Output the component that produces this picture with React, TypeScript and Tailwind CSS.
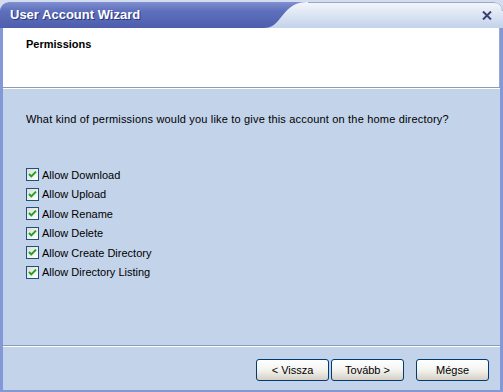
import React from "react";

const permissions = [
  "Allow Download",
  "Allow Upload",
  "Allow Rename",
  "Allow Delete",
  "Allow Create Directory",
  "Allow Directory Listing",
];

const font = "font-['Tahoma','Liberation_Sans',Arial,sans-serif]";

function CheckBox() {
  return (
    <span className="w-[13px] h-[13px] border border-[#1c5180] bg-gradient-to-br from-[#dcdcd7] to-white flex items-center justify-center">
      <svg width="9" height="9" viewBox="0 0 9 9">
        <path d="M1 4 L3.3 6.4 L8 1.6" fill="none" stroke="#21a121" strokeWidth="2" />
      </svg>
    </span>
  );
}

function Button({ label }: { label: string }) {
  return (
    <button className="block w-[73px] h-[22px] rounded-[3px] border border-[#003c74] bg-gradient-to-b from-white via-[#f3f3ef] to-[#d6d0c5] text-[11px] leading-[20px] text-black shadow-[inset_0_-1px_0_#d6d0c5]">
      {label}
    </button>
  );
}

export default function App() {
  return (
    <div className={`w-[503px] h-[392px] bg-[#d3ddef] overflow-hidden ${font}`}>
      <div className="h-full mt-[2px] rounded-t-[9px] overflow-hidden flex flex-col">
        {/* title bar */}
        <div className="relative h-[26px] shrink-0 flex items-center pl-[10px]">
          <svg className="absolute inset-0" width="503" height="26" viewBox="0 0 503 26">
            <defs>
              <linearGradient id="lite" x1="0" y1="0" x2="0" y2="1">
                <stop offset="0" stopColor="#f4f7fc" />
                <stop offset="1" stopColor="#c2d2ea" />
              </linearGradient>
              <linearGradient id="dark" x1="0" y1="0" x2="0" y2="1">
                <stop offset="0" stopColor="#7f8fd0" />
                <stop offset="0.35" stopColor="#5e6fbc" />
                <stop offset="1" stopColor="#4d5eac" />
              </linearGradient>
            </defs>
            <rect width="503" height="26" fill="url(#lite)" />
            <path d="M0 26 L0 0 L308 0 C296 0 290 4 282 14 C276 22 272 26 264 26 Z" fill="url(#dark)" />
            <path d="M308 0.5 L494 0.5 Q502 0.5 502.5 9" fill="none" stroke="#9aa9c6" />
          </svg>
          <span className="relative text-[13px] font-bold text-white [text-shadow:1px_1px_0_#2a3680] font-['Liberation_Sans',Arial,sans-serif]">
            User Account Wizard
          </span>
          <svg className="absolute right-[11px] top-[9px]" width="10" height="9" viewBox="0 0 10 9">
            <path d="M1 0.5 L9 8.5 M9 0.5 L1 8.5" stroke="#3a3f72" strokeWidth="2" />
          </svg>
        </div>

        {/* window body */}
        <div className="flex-1 flex flex-col border-l-[3px] border-r-[3px] border-b-[4px] border-[#8398d6] bg-[#c3d3ea]">
          <div className="h-[59px] shrink-0 bg-white pl-[23px] pt-[10px] border-r border-[#9aa9c6]">
            <div className="text-[11px] font-bold text-black leading-[13px]">Permissions</div>
          </div>
          <div className="h-[2px] shrink-0 border-t border-[#8c9cb2] bg-white" />

          <div className="flex-1 flex flex-col pl-[23px] pt-[24px]">
            <p className="text-[11px] leading-[13px] tracking-[0.18px] text-black">
              What kind of permissions would you like to give this account on the home directory?
            </p>
            <div className="flex flex-col mt-[39px]">
              {permissions.map((p) => (
                <label key={p} className="h-[19.5px] flex items-center gap-[3px] text-[11px] text-black">
                  <CheckBox />
                  <span>{p}</span>
                </label>
              ))}
            </div>
          </div>

          <div className="h-[2px] shrink-0 border-t border-[#8c9cb2] bg-white" />
          <div className="h-[43px] shrink-0 flex justify-end items-start pt-[12px] pr-[11px]">
            <div className="flex gap-[2px]">
              <Button label="< Vissza" />
              <Button label="Tovább >" />
            </div>
            <div className="ml-[12px] flex">
              <Button label="Mégse" />
            </div>
          </div>
        </div>
      </div>
    </div>
  );
}
